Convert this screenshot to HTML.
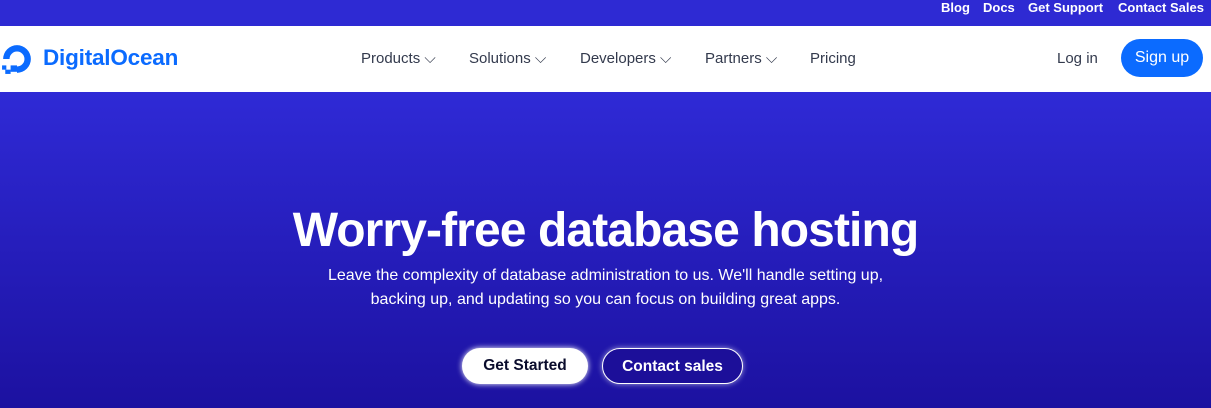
<!DOCTYPE html>
<html><head><meta charset="utf-8"><style>
*{margin:0;padding:0;box-sizing:border-box}
body{width:1211px;height:408px;overflow:hidden;font-family:"Liberation Sans",sans-serif;background:#2a25c9}
.top{height:26px;background:#2e2ad3;color:#fff;font-size:13px;font-weight:bold;position:relative}
.top span{position:absolute;top:0;line-height:15px}
.nav{height:66px;background:#fff;position:relative}
.logo{position:absolute;left:43px;top:19px;font-size:22.5px;font-weight:bold;color:#0b6bff;letter-spacing:-0.2px}
.menu{position:absolute;top:24px;font-size:15px;color:#333a4d}
.menu span{position:absolute;white-space:nowrap}
.signup{position:absolute;left:1121px;top:13px;width:82px;height:38px;border-radius:19px;background:#0b6bff;color:#fff;font-size:16px;text-align:center;line-height:38px}
.hero{position:absolute;top:92px;left:0;width:1211px;height:316px;background:linear-gradient(#2f2ad6,#1c11a0)}
h1{position:absolute;top:111px;width:100%;text-align:center;color:#fff;font-size:48px;font-weight:bold;letter-spacing:-0.9px}
p{position:absolute;top:172px;width:100%;text-align:center;color:#fff;font-size:16px;line-height:24px}
.b{position:absolute;top:256px;height:36px;border-radius:18px;font-size:15.5px;font-weight:bold;text-align:center;line-height:35px}
</style></head><body>
<div class="top">
<span style="left:941px">Blog</span><span style="left:983px">Docs</span><span style="left:1028px">Get Support</span><span style="left:1118px">Contact Sales</span>
</div>
<div class="nav">
<svg style="position:absolute;left:1px;top:17px" width="32" height="32" viewBox="0 0 30 30">
<path d="M15 28 V22 A7 7 0 1 0 8 15 H2 A13 13 0 1 1 15 28Z" fill="#0b6bff"/>
<rect x="9" y="21" width="6" height="6" fill="#0b6bff"/><rect x="4" y="25" width="5" height="4" fill="#0b6bff"/><rect x="1" y="21" width="4" height="4" fill="#0b6bff"/>
</svg>
<div class="logo">DigitalOcean</div>
<div class="menu">
<span style="left:361px">Products ⌵</span><span style="left:469px">Solutions ⌵</span><span style="left:580px">Developers ⌵</span><span style="left:705px">Partners ⌵</span><span style="left:810px">Pricing</span><span style="left:1057px">Log in</span>
</div>
<div class="signup">Sign up</div>
</div>
<div class="hero">
<h1>Worry-free database hosting</h1>
<p>Leave the complexity of database administration to us. We'll handle setting up,<br>backing up, and updating so you can focus on building great apps.</p>
<div class="b" style="left:462px;width:126px;background:#fff;color:#0a0c2c;box-shadow:0 0 6px #fff">Get Started</div>
<div class="b" style="left:602px;width:141px;background:#1c0f99;color:#fff;border:1.5px solid #fff;box-shadow:0 0 6px rgba(255,255,255,.6)">Contact sales</div>
</div>
</body></html>
